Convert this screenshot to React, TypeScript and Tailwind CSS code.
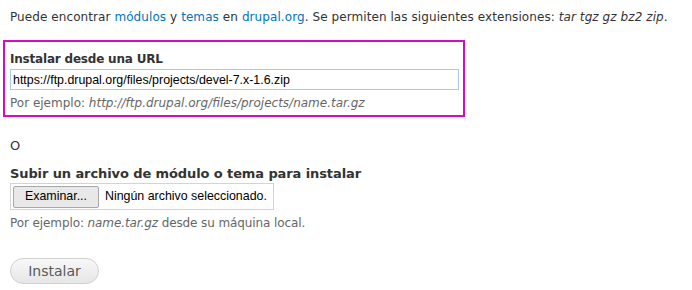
export default function App() {
  return (
    <div className="w-[692px] h-[290px] bg-white pl-[3px] pt-[8px] text-[12px] text-[#333] font-['DejaVu_Sans',sans-serif]">
      <p className="ml-[7px] leading-[18px] tracking-[0.08px]">
        Puede encontrar <a className="text-[#0074bd]">módulos</a> y <a className="text-[#0074bd]">temas</a> en{' '}
        <a className="text-[#0074bd]">drupal.org</a>. Se permiten las siguientes extensiones: <em>tar tgz gz bz2 zip</em>.
      </p>

      {/* URL */}
      <div className="mt-[14px] w-[462px] h-[77px] border-2 border-[#d10fc0] px-[5px] pt-[9px]">
        <label className="block font-bold text-[12px] leading-[16px] tracking-[-0.2px]">Instalar desde una URL</label>
        <input
          readOnly
          value="https://ftp.drupal.org/files/projects/devel-7.x-1.6.zip"
          className="mt-[2px] block w-[449px] h-[21px] border border-[#a9c8ea] px-[2px] text-[12.4px] text-black font-['Liberation_Sans',sans-serif] outline-none"
        />
        <div className="mt-[6px] text-[12px] text-[#666] leading-[15px]">
          Por ejemplo: <em>http://ftp.drupal.org/files/projects/name.tar.gz</em>
        </div>
      </div>

      <div className="ml-[7px]">
        <p className="mt-[21px] text-[13px] leading-[16px]">O</p>

        {/* upload */}
        <label className="mt-[12px] block font-bold text-[13px] leading-[16px] tracking-[-0.1px]">Subir un archivo de módulo o tema para instalar</label>
        <div className="mt-[1px] flex items-center w-[264px] h-[27px] border border-[#d4d4d4] pl-[2px] font-['Liberation_Sans',sans-serif] text-[12.4px] text-black whitespace-nowrap">
          <span className="flex items-center justify-center w-[86px] h-[22px] border border-[#a8a8a8] bg-[#e8e8e8] rounded-[2px]">Examinar...</span>
          <span className="ml-[6px]">Ningún archivo seleccionado.</span>
        </div>
        <div className="mt-[6px] text-[12px] text-[#666] leading-[15px] tracking-[-0.1px]">
          Por ejemplo: <em>name.tar.gz</em> desde su máquina local.
        </div>

        <button className="mt-[27px] w-[89px] h-[26px] rounded-full border border-[#d0d0d0] bg-gradient-to-b from-[#f8f8f8] to-[#e6e6e6] text-[14px] text-[#5a5a5a]">
          Instalar
        </button>
      </div>
    </div>
  )
}
